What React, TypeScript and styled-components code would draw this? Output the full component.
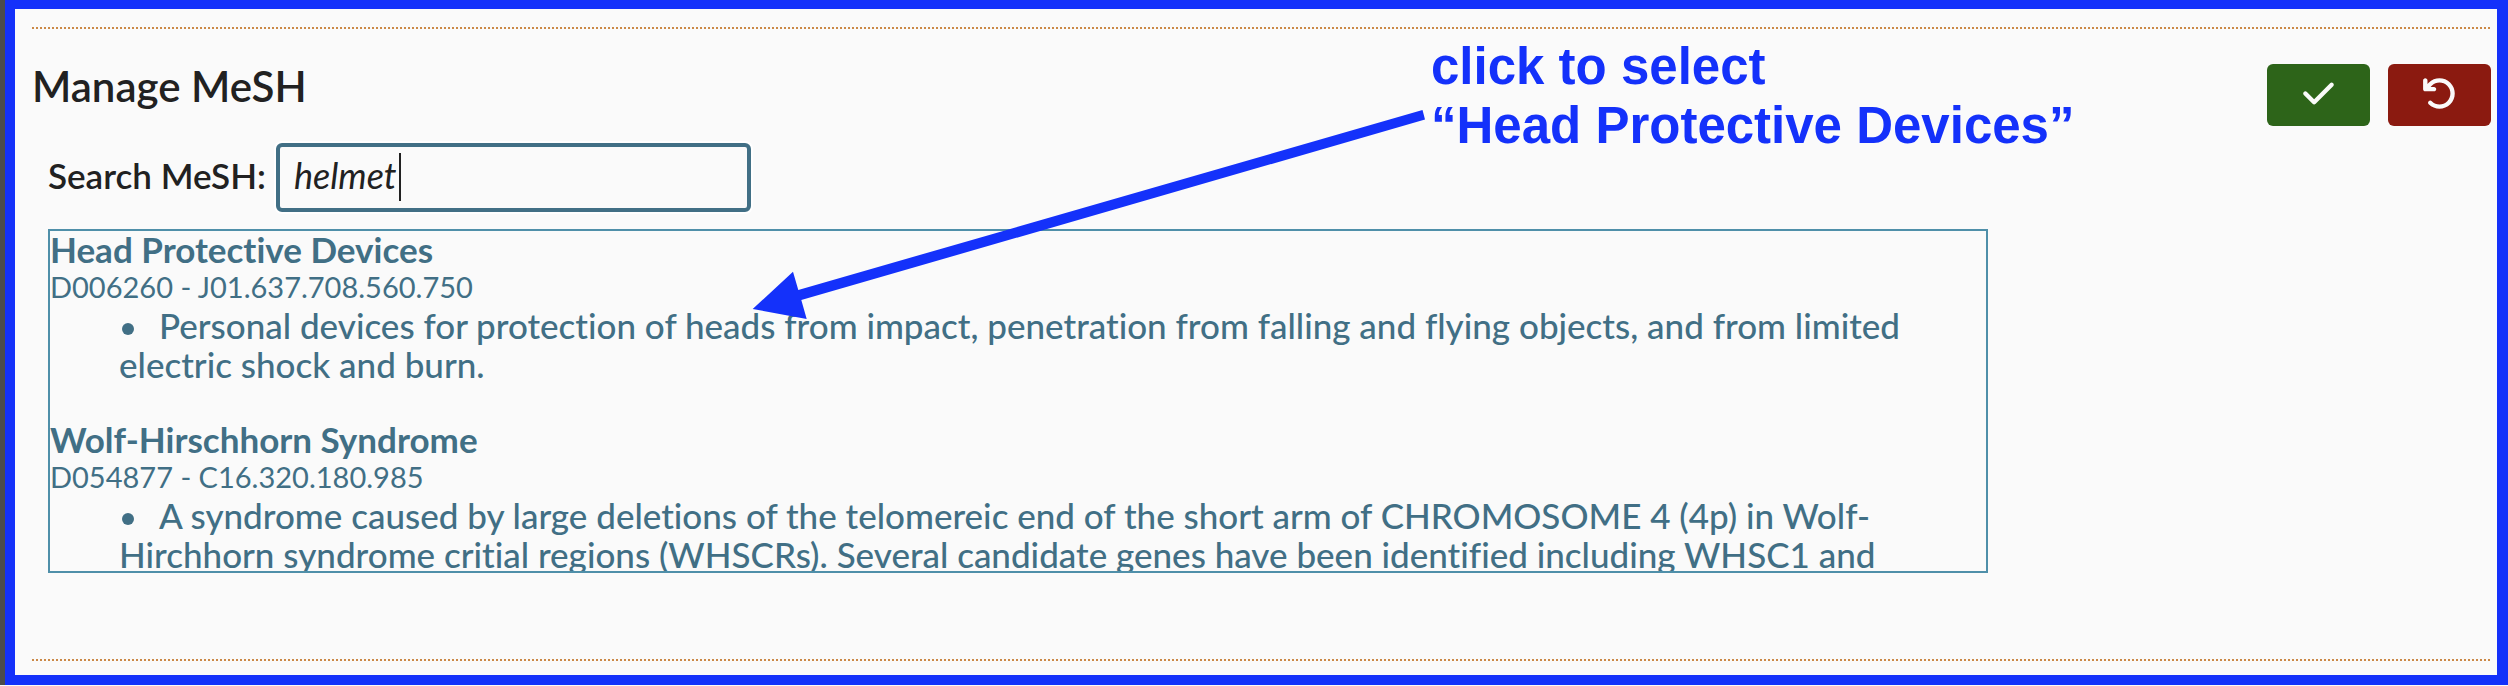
import React, { useState } from "react";
import styled, { createGlobalStyle } from "styled-components";
import { FaArrowRotateLeft, FaCheck } from "react-icons/fa6";

const GlobalStyle = createGlobalStyle`
  *, *::before, *::after { box-sizing: border-box; }
  body {
    margin: 0;
    background: #fafafa;
    color: #212121;
    font: 400 35px/39px Lato, "Open Sans", sans-serif;
    font-variant-ligatures: none;
  }
`;

const Page = styled.div`
  position: relative;
  border-left: 5px solid #4c4c4c;
`;

const Frame = styled.main`
  border: solid #1431fa;
  border-width: 9px 11px 10px 10px;
  padding: 18px 6px 14px 17px;
`;

const Rule = styled.hr`
  height: 2px;
  margin: 0;
  border: 0;
  background: repeating-linear-gradient(90deg, #cb8947 0 2px, transparent 2px 4px);
`;

const Header = styled.header`
  display: flex;
  justify-content: space-between;
  align-items: flex-start;
  padding-top: 35px;
`;

const Title = styled.h1`
  margin: 0;
  font-size: 42px;
  line-height: 44px;
  font-weight: 600;
`;

const Actions = styled.div`
  display: flex;
  gap: 18px;
`;

const ActionButton = styled.button<{ $tone: string }>`
  display: flex;
  align-items: center;
  justify-content: center;
  width: 103px;
  height: 62px;
  padding: 0 0 4px;
  border: 0;
  border-radius: 6px;
  background: ${(p) => p.$tone};
  color: #fafafa;
  font-size: 35px;
`;

const Manager = styled.section`
  display: flex;
  flex-direction: column;
  gap: 17px;
  padding: 17px 18px 86px 16px;
`;

const SearchRow = styled.div`
  display: flex;
  align-items: baseline;
  gap: 10px;
`;

const SearchLabel = styled.label`
  font-weight: 600;
`;

const SearchField = styled.div`
  position: relative;
  width: 475px;
`;

const SearchInput = styled.input`
  display: block;
  width: 100%;
  height: 69px;
  padding: 0 14px 6px;
  border: 4px solid #416f85;
  border-radius: 6px;
  outline: 0;
  box-shadow: 0 0 0 2px #fff;
  background: #fafafa;
  color: inherit;
  font: inherit;
  font-size: 36px;
  font-style: italic;
  caret-color: transparent;
`;

const Caret = styled.span`
  position: absolute;
  top: 10px;
  left: 123px;
  width: 2px;
  height: 48px;
  background: #212121;
`;

const Results = styled.div`
  display: flex;
  flex-direction: column;
  gap: 37px;
  width: 80%;
  height: 344px;
  overflow: hidden;
  border: 2px solid #4f8fa9;
  color: #416f85;
`;

const Result = styled.article`
  flex: none;
`;

const ResultButton = styled.button`
  display: block;
  padding: 0;
  border: 0;
  background: none;
  color: inherit;
  font: inherit;
  text-align: left;
  cursor: pointer;
`;

const ResultName = styled.span`
  display: block;
  line-height: 36px;
  font-weight: 700;
`;

const ResultCode = styled.span`
  display: block;
  font-size: 29px;
`;

const Notes = styled.ul`
  margin: 0;
  padding: 0 64px 0 69px;
  list-style: none;
`;

const Note = styled.li`
  font-weight: 500;

  &::before {
    content: "";
    display: inline-block;
    width: 12px;
    height: 12px;
    margin: 0 25px 0 3px;
    border-radius: 50%;
    background: currentColor;
    vertical-align: 4px;
  }
`;

const Callout = styled.p`
  position: absolute;
  top: 37px;
  left: 1426px;
  margin: 0;
  color: #1431fa;
  font: 700 51px/59px "Liberation Sans", Arial, sans-serif;
  white-space: nowrap;
  pointer-events: none;
`;

const Arrow = styled.svg`
  position: absolute;
  top: 109px;
  left: 747px;
  fill: #1431fa;
  pointer-events: none;
`;

const terms = [
  {
    name: "Head Protective Devices",
    code: "D006260 - J01.637.708.560.750",
    note: "Personal devices for protection of heads from impact, penetration from falling and flying objects, and from limited electric shock and burn.",
  },
  {
    name: "Wolf-Hirschhorn Syndrome",
    code: "D054877 - C16.320.180.985",
    note: "A syndrome caused by large deletions of the telomereic end of the short arm of CHROMOSOME 4 (4p) in Wolf-Hirchhorn syndrome critial regions (WHSCRs). Several candidate genes have been identified including WHSC1 and",
  },
];

export default function App() {
  const [query, setQuery] = useState("helmet");

  return (
    <>
      <GlobalStyle />
      <Page>
        <Frame>
          <Rule />
          <Header>
            <Title>Manage MeSH</Title>
            <Actions>
              <ActionButton type="button" $tone="#2d6419" aria-label="Save">
                <FaCheck />
              </ActionButton>
              <ActionButton type="button" $tone="#8b1a10" aria-label="Undo">
                <FaArrowRotateLeft />
              </ActionButton>
            </Actions>
          </Header>
          <Manager>
            <SearchRow>
              <SearchLabel htmlFor="mesh-search">Search MeSH:</SearchLabel>
              <SearchField>
                <SearchInput
                  id="mesh-search"
                  type="text"
                  value={query}
                  onChange={(e) => setQuery(e.target.value)}
                />
                <Caret />
              </SearchField>
            </SearchRow>
            <Results>
              {terms.map((term) => (
                <Result key={term.code}>
                  <ResultButton type="button">
                    <ResultName>{term.name}</ResultName>
                    <ResultCode>{term.code}</ResultCode>
                  </ResultButton>
                  <Notes>
                    <Note>{term.note}</Note>
                  </Notes>
                </Result>
              ))}
            </Results>
          </Manager>
          <Rule />
        </Frame>
        <Callout>
          click to select
          <br />
          “Head Protective Devices”
        </Callout>
        <Arrow width="674" height="212" viewBox="0 0 674 212" aria-hidden="true">
          <path d="M0.7 200 L41 162.7 L46.3 181 L670.5 1 L673 10.6 L49.3 191 L54.7 210 Z" />
        </Arrow>
      </Page>
    </>
  );
}
